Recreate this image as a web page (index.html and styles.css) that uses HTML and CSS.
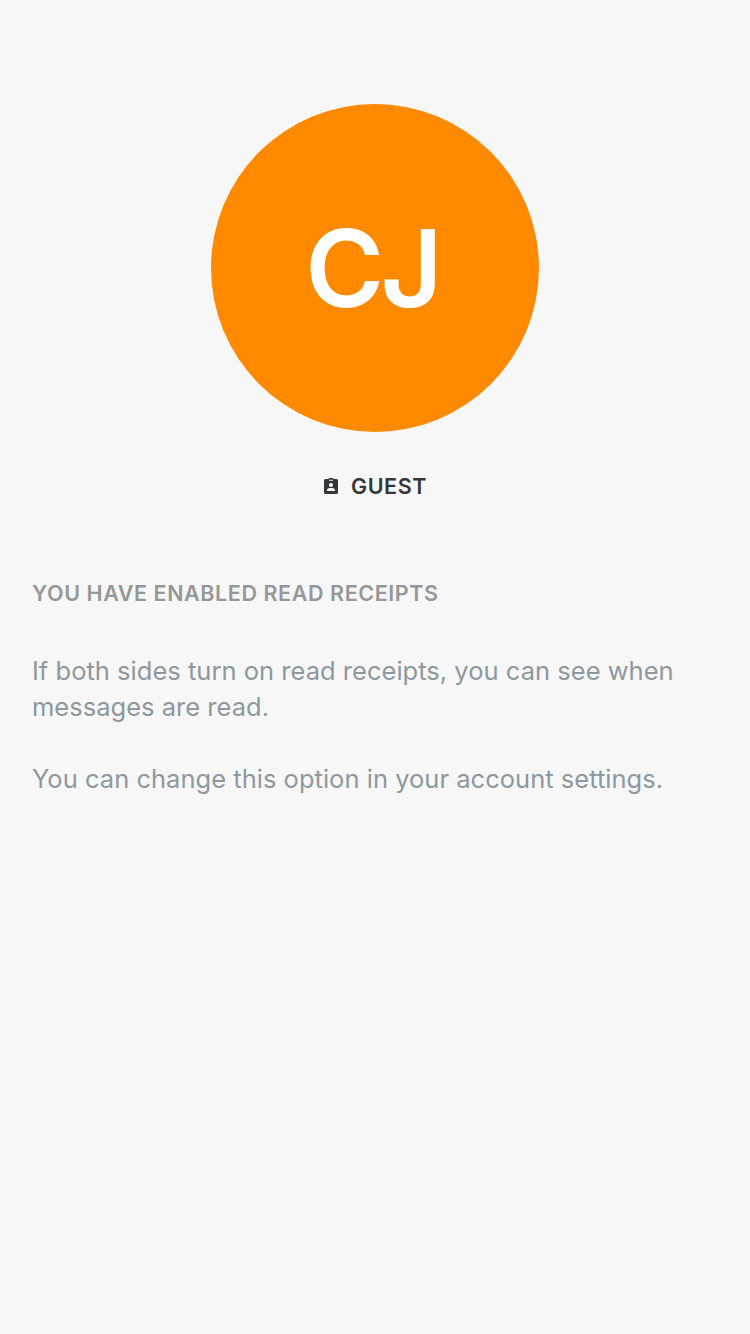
FILE: index.html
```html
<!DOCTYPE html>
<html lang="en">
<head>
<meta charset="utf-8">
<title>Profile</title>
<link rel="stylesheet" href="styles.css">
</head>
<body>
<main class="profile">
  <div class="avatar"><span class="initials">CJ</span></div>
  <div class="role">
    <svg class="role-icon" viewBox="0 0 14 16" aria-hidden="true"><path fill="#33373a" fill-rule="evenodd" d="M1.500 1H4.500C4.500.400 5 0 5.500 0h3c.5 0 1 .4 1 1h3A1.500 1.500 0 0 1 14 2.500v12a1.500 1.500 0 0 1-1.500 1.500h-11A1.500 1.500 0 0 1 0 14.500v-12A1.500 1.500 0 0 1 1.500 1ZM5 1.700v1h4v-1ZM7 4.900a2.100 2.100 0 1 0 0 4.200 2.100 2.100 0 0 0 0-4.200ZM3 13h8v-1c0-1.300-1.700-2-2.700-2H5.700C4.700 10 3 10.700 3 12Z"/></svg>
    <span class="role-label">GUEST</span>
  </div>
  <section class="receipts">
    <h1 class="heading">YOU HAVE ENABLED READ RECEIPTS</h1>
    <p class="note">If both sides turn on read receipts, you can see when<br>messages are read.</p>
    <p class="note second">You can change this option in your account settings.</p>
  </section>
</main>
</body>
</html>
```
FILE: styles.css
```css
body {
  margin: 0;
  background: #f7f7f7;
  font-family: Inter, sans-serif;
}
.profile {
  box-sizing: border-box;
  height: 1334px;
  padding-top: 104px;
}
.avatar {
  display: flex;
  align-items: center;
  justify-content: center;
  width: 328px;
  height: 328px;
  margin: 0 auto;
  border-radius: 50%;
  background: #ff8a00;
}
.initials {
  padding: 0 6px 0 0;
  color: #fff;
  font-size: 107px;
  font-weight: 600;
  letter-spacing: -3.8px;
  line-height: 1;
}
.role {
  display: flex;
  align-items: center;
  justify-content: center;
  gap: 13px;
  height: 28px;
  margin-top: 40px;
}
.role-icon {
  width: 14px;
  height: 16px;
}
.role-label {
  margin-right: -1px;
  color: #33373a;
  font-size: 21.5px;
  font-weight: 600;
  letter-spacing: 0.55px;
  line-height: 28px;
}
.receipts {
  padding: 79px 32px 0;
}
.heading {
  margin: 0;
  color: #959798;
  font-size: 21.5px;
  font-weight: 600;
  letter-spacing: 0.58px;
  line-height: 28px;
  white-space: nowrap;
}
.note {
  margin: 46px 0 0;
  color: #8d989f;
  font-size: 25.5px;
  letter-spacing: 0.02px;
  line-height: 36px;
  white-space: nowrap;
}
.second {
  margin-top: 36px;
}
```
